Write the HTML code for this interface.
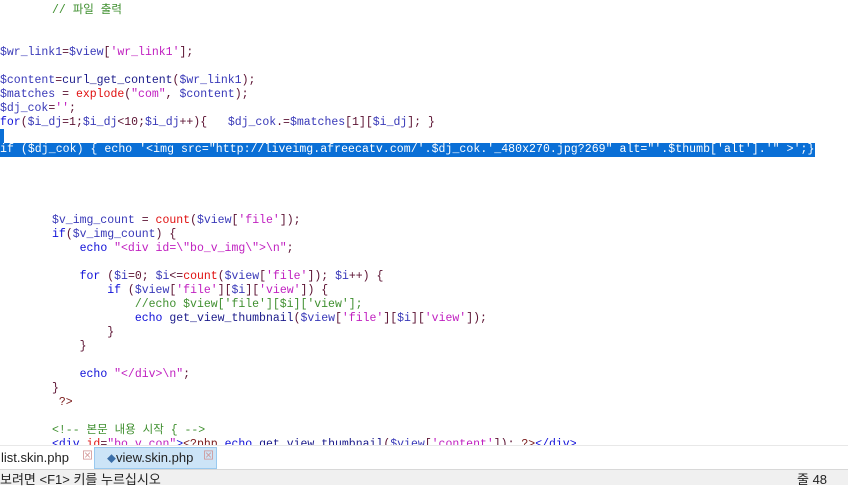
<!DOCTYPE html>
<html><head><meta charset="utf-8"><style>
body{margin:0;width:848px;height:484px;overflow:hidden;background:#fff;position:relative;font-family:"Liberation Mono","Noto Sans CJK KR",monospace;}
.l{position:absolute;left:0;height:14px;line-height:14px;font-size:11.5px;white-space:pre;color:#5a1030;}
.i{left:52px}
.v{color:#3838b8}.s{color:#c020c0}.f{color:#e01010}.k{color:#1010d8}.c{color:#3f8f2f}.p{color:#7a1a1a}.t{color:#1a1a8a}
.sel{background:#0a6fd6;color:#fff}
#tabs{position:absolute;left:0;top:445px;width:848px;height:24px;background:#fff;border-top:1px solid #e8e8e8;font-family:"Liberation Sans","Noto Sans CJK KR",sans-serif;font-size:13px;}
#status{position:absolute;left:0;top:469px;width:848px;height:15px;background:#f0f0f0;border-top:1px solid #d8d8d8;font-family:"Liberation Sans","Noto Sans CJK KR",sans-serif;font-size:13px;line-height:20px;color:#222;}
.x{position:absolute;top:5px;width:10px;height:10px;color:#d09090;font-size:11px;line-height:10px;}
</style></head><body>
<div class="l c i" style="top:4px">// 파일 출력</div>
<div class="l" style="top:46px"><span class="v">$wr_link1</span>=<span class="v">$view</span>[<span class="s">'wr_link1'</span>];</div>
<div class="l" style="top:74px"><span class="v">$content</span>=<span class="t">curl_get_content</span>(<span class="v">$wr_link1</span>);</div>
<div class="l" style="top:88px"><span class="v">$matches</span> = <span class="f">explode</span>(<span class="s">"com"</span>, <span class="v">$content</span>);</div>
<div class="l" style="top:102px"><span class="v">$dj_cok</span>=<span class="s">''</span>;</div>
<div class="l" style="top:116px"><span class="k">for</span>(<span class="v">$i_dj</span>=1;<span class="v">$i_dj</span>&lt;10;<span class="v">$i_dj</span>++){   <span class="v">$dj_cok</span>.=<span class="v">$matches</span>[1][<span class="v">$i_dj</span>]; }</div>
<div class="l sel" style="top:129px;width:4px"> </div>
<div class="l sel" style="top:143px;width:815px;letter-spacing:0.06px">if ($dj_cok) { echo '&lt;img src="http://liveimg.afreecatv.com/'.$dj_cok.'_480x270.jpg?269" alt="'.$thumb['alt'].'" &gt;';}</div>
<div class="l i" style="top:214px"><span class="v">$v_img_count</span> = <span class="f">count</span>(<span class="v">$view</span>[<span class="s">'file'</span>]);</div>
<div class="l i" style="top:228px"><span class="k">if</span>(<span class="v">$v_img_count</span>) {</div>
<div class="l i" style="top:242px">    <span class="k">echo</span> <span class="s">"&lt;div id=\"bo_v_img\"&gt;\n"</span>;</div>
<div class="l i" style="top:270px">    <span class="k">for</span> (<span class="v">$i</span>=0; <span class="v">$i</span>&lt;=<span class="f">count</span>(<span class="v">$view</span>[<span class="s">'file'</span>]); <span class="v">$i</span>++) {</div>
<div class="l i" style="top:284px">        <span class="k">if</span> (<span class="v">$view</span>[<span class="s">'file'</span>][<span class="v">$i</span>][<span class="s">'view'</span>]) {</div>
<div class="l i" style="top:298px">            <span class="c">//echo $view['file'][$i]['view'];</span></div>
<div class="l i" style="top:312px">            <span class="k">echo</span> <span class="t">get_view_thumbnail</span>(<span class="v">$view</span>[<span class="s">'file'</span>][<span class="v">$i</span>][<span class="s">'view'</span>]);</div>
<div class="l i" style="top:326px">        }</div>
<div class="l i" style="top:340px">    }</div>
<div class="l i" style="top:368px">    <span class="k">echo</span> <span class="s">"&lt;/div&gt;\n"</span>;</div>
<div class="l i" style="top:382px">}</div>
<div class="l p i" style="top:396px"> ?&gt;</div>
<div class="l c i" style="top:424px">&lt;!-- 본문 내용 시작 { --&gt;</div>
<div class="l i" style="top:438px"><span class="k">&lt;div</span> <span class="f">id</span>=<span class="s">"bo_v_con"</span><span class="k">&gt;</span><span class="p">&lt;?php</span> <span class="k">echo</span> <span class="t">get_view_thumbnail</span>(<span class="v">$view</span>[<span class="s">'content'</span>]); <span class="p">?&gt;</span><span class="k">&lt;/div&gt;</span></div>
<div id="tabs">
<div style="position:absolute;left:1px;top:4px;color:#222">list.skin.php</div>
<div class="x" style="left:82px">⊠</div>
<div style="position:absolute;left:94px;top:1px;width:121px;height:20px;background:#cce4f7;border:1px solid #99c9ef;"></div>
<div style="position:absolute;left:107px;top:4px;color:#222"><span style="color:#3a6ea8;font-size:9px">◆</span>view.skin.php</div>
<div class="x" style="left:203px">⊠</div>
</div>
<div id="status"><span style="position:absolute;left:0;top:0">보려면 &lt;F1&gt; 키를 누르십시오</span><span style="position:absolute;left:797px;top:0">줄 48</span></div>
</body></html>
